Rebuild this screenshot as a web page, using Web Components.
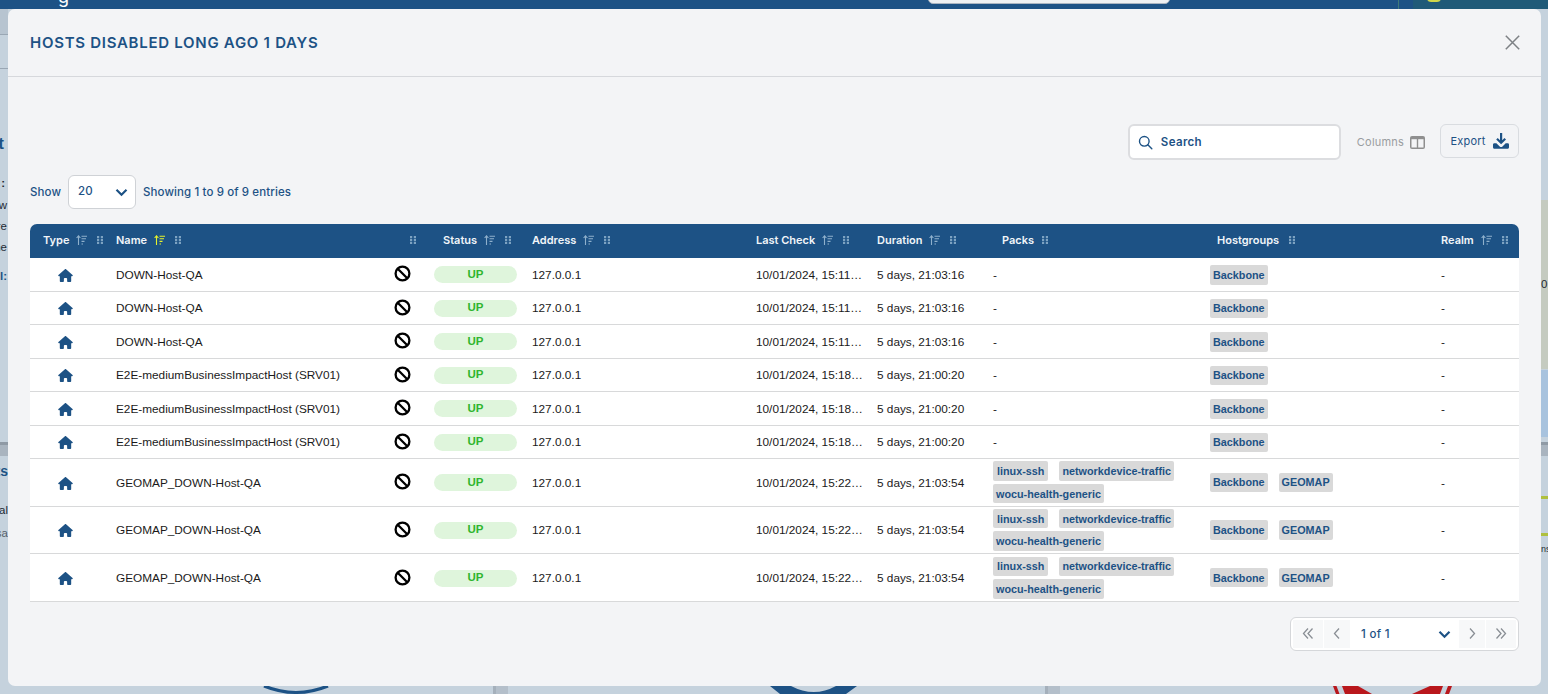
<!DOCTYPE html>
<html lang="en">
<head>
<meta charset="utf-8">
<title>Hosts disabled</title>
<style>
html,body{margin:0;padding:0;height:694px;overflow:hidden;background:#c5d2dd}
body{font-family:Inter,"Liberation Sans",sans-serif;color:#1d5285}
</style>
</head>
<body>
<x-backdrop></x-backdrop>
<x-modal heading="HOSTS DISABLED LONG AGO 1 DAYS">
  <x-toolbar></x-toolbar>
  <x-length-bar></x-length-bar>
  <x-table id="t"></x-table>
  <x-pager></x-pager>
</x-modal>
<script>
const COLS='86px 270px 48px 98px 224px 121px 116px 217px 231px 78px';
const def=(name,html,extra)=>{
  customElements.define(name,class extends HTMLElement{
    connectedCallback(){
      if(this.shadowRoot)return;
      const r=this.attachShadow({mode:'open'});
      r.innerHTML=typeof html==='function'?html(this):html;
      if(extra)extra(this,r);
    }
  });
};
const ICON={
 home:'<svg width="15" height="13" viewBox="0 0 576 512" fill="#1d5285"><path d="M575.8 255.5c0 18-15 32.1-32 32.1h-32l.7 160.2c0 2.7-.2 5.4-.5 8.1V472c0 22.1-17.9 40-40 40H456c-1.1 0-2.2 0-3.3-.1-1.4.1-2.8.1-4.2.1H392c-22.1 0-40-17.9-40-40V384c0-17.7-14.3-32-32-32H256c-17.7 0-32 14.3-32 32v88c0 22.1-17.9 40-40 40H128c-1.5 0-3-.1-4.5-.2-1.2.1-2.4.2-3.6.2H104c-22.1 0-40-17.9-40-40V360c0-.9 0-1.9.1-2.8V287.600H32c-18 0-32-14-32-32.100 0-9 3-17 10-24L266.400 8c7-7 15-8 22-8s15 2 21 7L564.800 231.500c8 7 12 15 11 24z"/></svg>',
 ban:'<svg width="17" height="17" viewBox="0 0 17 17" fill="none" stroke="#000" stroke-width="2.3"><circle cx="8.500" cy="8.500" r="6.900"/><path d="M3.700 3.700l9.600 9.600"/></svg>',
 search:'<svg width="15" height="15" viewBox="0 0 15 15" fill="none" stroke="#1d5285" stroke-width="1.400"><circle cx="6.300" cy="6.300" r="4.800"/><path d="M9.800 9.800l4 4" stroke-linecap="round"/></svg>',
 cols:'<svg width="15" height="13" viewBox="0 0 15 13"><rect width="15" height="13" rx="2" fill="#8f8f8f"/><rect x="1.500" y="3.200" width="5.300" height="8.300" fill="#f3f4f6"/><rect x="8.200" y="3.200" width="5.300" height="8.300" fill="#f3f4f6"/></svg>',
 export:'<svg width="16" height="16" viewBox="0 0 16 16" fill="#1d5285"><path d="M7 0h2.200v7.200l2.300-2.300 1.500 1.500L8.100 11.300 3.200 6.400l1.500-1.500L7 7.200z"/><path d="M0 11.700c0-.8.600-1.400 1.400-1.400h2l3.300 3.200c.8.700 2 .7 2.800 0l3.200-3.200h2c.8 0 1.300.6 1.300 1.400v2.600c0 .9-.6 1.500-1.400 1.500H1.400C.6 15.800 0 15.200 0 14.300z"/></svg>',
 chev:'<svg width="13" height="9" viewBox="0 0 13 9" fill="none" stroke="#1d5285" stroke-width="2.200"><path d="M1.500 1.800l5 5 5-5"/></svg>'
};
const pg=d=>`<svg width="12" height="13" viewBox="0 0 12 13" fill="none" stroke="#8a8f95" stroke-width="1.300"><path d="${d}"/></svg>`;

def('x-backdrop',`<style>
:host{position:absolute;inset:0;display:block;overflow:hidden;background:#c5d2dd;font:700 11.500px "Liberation Sans",sans-serif;color:#1f2a33}
div,span,svg{position:absolute}
.top{left:0;right:0;top:0;height:9px;background:#1d5285}
.side{left:0;width:8px}
.t{white-space:nowrap}
</style>
<div class="top"></div>
<span class="t" style="left:58px;top:-14px;font:400 18px Inter,sans-serif;color:#fff">g</span>
<div style="left:928px;top:-30px;width:240px;height:32px;background:#eef0f2;border:1px solid #aab4c0;border-radius:5px"></div>
<div style="left:1398px;top:0;width:1px;height:9px;background:#3f7a7a"></div>
<div style="left:1413px;top:0;width:135px;height:9px;background:#1f5a78"></div>
<div style="left:1427px;top:-6px;width:14px;height:8px;border-radius:7px;background:#cfd64a"></div>
<div class="side" style="top:9px;height:25px;background:#b7c4d0;border-bottom:1px solid #9aa7b4"></div>
<div class="side" style="top:68px;height:1px;background:#9aa7b4"></div>
<div class="side" style="top:442px;height:14px;background:#a9b4bf;border-top:3px solid #8f9aa5;box-sizing:border-box"></div>
<div style="left:1541px;width:7px;top:442px;height:14px;background:#a9b4bf;border-top:3px solid #8f9aa5;box-sizing:border-box"></div>
<div style="left:1541px;width:7px;top:200px;height:169px;background:#c5cbc0"></div>
<div style="left:1541px;width:7px;top:370px;height:67px;background:#a8c3de"></div>
<div style="left:1541px;width:7px;top:496px;height:3px;background:#afc03e"></div>
<div style="left:1541px;width:7px;top:533px;height:3px;background:#afc03e"></div>
<span class="t" style="right:1544px;top:134px;font-size:17px;color:#1d5285">t</span>
<span class="t" style="right:1543px;top:177px">:</span>
<span class="t" style="right:1541px;top:199px;font-weight:400">w</span>
<span class="t" style="right:1541px;top:220px;font-weight:400">re</span>
<span class="t" style="right:1541px;top:241px;font-weight:400">ne</span>
<span class="t" style="right:1541px;top:270px;color:#1d5285">l:</span>
<span class="t" style="right:1540px;top:463px;font-size:14px;color:#1d5285">ts</span>
<span class="t" style="right:1540px;top:504px;font-weight:400">al</span>
<span class="t" style="right:1540px;top:527px;font-weight:400;color:#55606a">sa</span>
<span class="t" style="left:1541px;top:278px;font-weight:400">0.</span>
<span class="t" style="left:1541px;top:544px;font-weight:400;font-size:9px">ns</span>
<div style="left:493px;top:686px;width:15px;height:8px;background:#b4bfca;border-left:3px solid #a5b0bb;box-sizing:border-box"></div>
<div style="left:1045px;top:686px;width:15px;height:8px;background:#b4bfca;border-left:3px solid #a5b0bb;box-sizing:border-box"></div>
<svg style="left:0;top:680px" width="1548" height="14" viewBox="0 680 1548 14">
<path d="M264 686Q296 699 328 686" fill="none" stroke="#1d5285" stroke-width="3"/>
<path d="M770 686L780 694H846L857 686H836Q814 698 791 686Z" fill="#1d5285"/>
<path d="M1333 686h3.500l3 8h-3.500zM1342 686h16l14 8h-27zM1430 686h13l-3 8h-28zM1448 686h4l-3 8h-4z" fill="#b9171c"/>
</svg>
`);

def('x-modal',h=>`<style>
:host{position:absolute;left:8px;top:9px;width:1533px;height:677px;display:flex;flex-direction:column;background:#f3f4f6;border-radius:7px;overflow:hidden}
header{height:68px;flex:none;box-sizing:border-box;border-bottom:1px solid #d6d8dc;display:flex;align-items:center;justify-content:space-between;padding:0 21px 1px 22px}
h1{margin:0;font:600 15px Inter,"Liberation Sans",sans-serif;color:#1d5285;letter-spacing:.72px}
main{flex:1;padding:47px 22px 0;display:flex;flex-direction:column}
svg{display:block}
</style>
<header><h1>${h.getAttribute('heading')}</h1>
<svg width="15" height="15" viewBox="0 0 15 15" stroke="#7d8185" stroke-width="1.500" fill="none"><path d="M.800.800l13.400 13.400M14.200.800L.800 14.200"/></svg></header>
<main><slot></slot></main>`);

def('x-toolbar',`<style>
:host{display:flex;justify-content:flex-end;align-items:flex-start;height:36px;font:11.500px Inter,"Liberation Sans",sans-serif}
.s{width:213px;height:36px;box-sizing:border-box;background:#fff;border:2px solid #dcdde0;border-radius:6px;display:flex;align-items:center;gap:8px;padding:0 0 0 8px;font-weight:600;color:#1d5285;letter-spacing:.35px}
.c{display:flex;align-items:center;height:36px;margin-left:16px;color:#9a9da0;gap:6px;font-size:11px;letter-spacing:.2px}
.e{display:flex;align-items:center;justify-content:center;gap:7px;margin-left:15px;width:79px;height:34px;box-sizing:border-box;border:1px solid #d9dce0;border-radius:6px;color:#1d5285;font-size:11px;letter-spacing:.2px}
svg{display:block}
</style>
<div class="s">${ICON.search}<span>Search</span></div>
<div class="c"><span>Columns</span>${ICON.cols}</div>
<div class="e"><span>Export</span>${ICON.export}</div>`);

def('x-length-bar',`<style>
:host{display:flex;align-items:center;gap:7px;height:34px;margin:15px 0;font:500 11.500px Inter,"Liberation Sans",sans-serif;color:#1d5285;letter-spacing:.1px}
.sel{width:68px;height:34px;box-sizing:border-box;background:#fff;border:1px solid #cfd2d6;border-radius:6px;display:flex;align-items:center;justify-content:space-between;padding:0 7px 2px 9px}
svg{display:block;margin-top:3px}
</style>
<span>Show</span>
<div class="sel"><span>20</span>${ICON.chev}</div>
<span>Showing 1 to 9 of 9 entries</span>`);

def('x-sort',h=>{const c=h.hasAttribute('active')?'#e6f22c':'#8fb0cc';return `<style>:host{display:inline-flex;margin-left:7px}svg{display:block}</style>
<svg width="11" height="10" viewBox="0 0 11 10" fill="none" stroke="${c}" stroke-width="1.100"><path d="M2.500 10V1M.600 3l1.900-2.200L4.400 3"/><path d="M5.500 1.200H11M5.500 3.800H10M5.500 6.400H8.500M5.500 9H7"/></svg>`;});

def('x-grip',`<style>:host{display:inline-flex}svg{display:block}</style>
<svg width="6" height="8" viewBox="0 0 6 8" fill="#7da3c2"><rect width="2.200" height="2.200"/><rect x="3.800" width="2.200" height="2.200"/><rect y="2.900" width="2.200" height="2.200"/><rect x="3.800" y="2.900" width="2.200" height="2.200"/><rect y="5.800" width="2.200" height="2.200"/><rect x="3.800" y="5.800" width="2.200" height="2.200"/></svg>`);

def('x-th',h=>`<style>
:host{display:flex;align-items:center;font:600 11px Inter,"Liberation Sans",sans-serif;color:#f1f5f9;white-space:nowrap;padding-left:${h.getAttribute('pad')||0}px;padding-bottom:2px;box-sizing:border-box}
.g{margin-left:${h.getAttribute('gap')||10}px;display:inline-flex}
</style><span>${h.getAttribute('label')||''}</span>${h.hasAttribute('sort')?`<x-sort ${h.getAttribute('sort')==='on'?'active':''}></x-sort>`:''}<span class="g"><x-grip></x-grip></span>`);

def('x-thead',`<style>
:host{display:grid;grid-template-columns:${COLS};height:34px;background:#1d5285;border-radius:7px 7px 0 0}
</style><slot></slot>`);

def('x-tag',`<style>
:host{display:inline-flex;align-items:center;height:19.500px;padding:0 3px;background:#d9d9d9;border-radius:2px;font:700 10.800px "Liberation Sans",sans-serif;color:#1d5285;white-space:nowrap}
</style><slot></slot>`);

def('x-pill',`<style>
:host{display:flex;align-items:center;justify-content:center;width:83px;height:17px;padding-bottom:2px;box-sizing:border-box;border-radius:9px;background:#dff5dc;color:#2fb52f;font:700 11.500px "Liberation Sans",sans-serif}
</style><slot></slot>`);

def('x-row',h=>{
  const d=JSON.parse(h.getAttribute('data'));
  const tags=(a)=>a.length?a.map(t=>`<x-tag${t==='linux-ssh'?' style="padding:0 4px"':''}>${t}</x-tag>`).join(''):'-';
  return `<style>
:host{display:grid;grid-template-columns:${COLS};height:${d.tall?47.67:33.5}px;box-sizing:border-box;padding-top:1px;background:#fff;border-bottom:1px solid #d8d9da;font:11.800px "Liberation Sans",sans-serif;color:#1a1a1a}
.c{display:flex;align-items:center;white-space:nowrap;min-width:0}
.i{justify-content:center}
.h{padding-left:27.500px;box-sizing:border-box;padding-top:1px}
.tags{display:flex;flex-wrap:wrap;gap:3px 11px;align-content:center;${d.tall?'padding-bottom:1px;':''}}
.p{padding-left:0}
svg{display:block}
.b{padding-bottom:2px}
</style>
<div class="c h">${ICON.home}</div>
<div class="c">${d.name}</div>
<div class="c i b" style="padding-right:16px">${ICON.ban}</div>
<div class="c"><x-pill>UP</x-pill></div>
<div class="c">127.0.0.1</div>
<div class="c">${d.check}</div>
<div class="c">${d.dur}</div>
<div class="c tags p">${tags(d.packs)}</div>
<div class="c tags">${tags(d.groups)}</div>
<div class="c">-</div>`;
});

def('x-table',`<style>:host{display:block}</style>
<x-thead>
<x-th label="Type" sort pad="13"></x-th>
<x-th label="Name" sort="on"></x-th>
<x-th label="" pad="24" gap="0"></x-th>
<x-th label="Status" sort pad="9"></x-th>
<x-th label="Address" sort></x-th>
<x-th label="Last Check" sort></x-th>
<x-th label="Duration" sort></x-th>
<x-th label="Packs" pad="9" gap="8"></x-th>
<x-th label="Hostgroups" pad="7"></x-th>
<x-th label="Realm" sort></x-th>
</x-thead><slot></slot>`);

def('x-pager',`<style>
:host{display:flex;align-items:stretch;align-self:flex-end;width:229px;height:34px;margin-top:15px;box-sizing:border-box;padding:2px;background:#fff;border:1px solid #d5d7da;border-radius:6px;font:500 11.500px Inter,"Liberation Sans",sans-serif;color:#1d5285;letter-spacing:.3px}
.b{display:flex;align-items:center;justify-content:center;flex:none;background:#f7f8f9}
.w{width:30px}.n{width:26px;margin-left:1px}
.m{flex:1;display:flex;align-items:center;justify-content:space-between;padding:0 8px 0 11px}
svg{display:block}
.m svg{margin-top:2px}
</style>
<div class="b w">${pg('M6 1.500L1.500 6.500 6 11.500M10.500 1.500L6 6.500l4.500 5')}</div>
<div class="b n">${pg('M8 1.500L3.500 6.500 8 11.500')}</div>
<div class="m"><span>1 of 1</span>${ICON.chev}</div>
<div class="b n" style="margin:0 1px 0 0">${pg('M4 1.500l4.500 5-4.500 5')}</div>
<div class="b w">${pg('M1.500 1.500L6 6.500l-4.500 5M6 1.500l4.500 5-4.500 5')}</div>`);

const packs=['linux-ssh','networkdevice-traffic','wocu-health-generic'];
const rows=[];
for(let i=0;i<3;i++)rows.push({name:'DOWN-Host-QA',check:'10/01/2024, 15:11…',dur:'5 days, 21:03:16',packs:[],groups:['Backbone']});
for(let i=0;i<3;i++)rows.push({name:'E2E-mediumBusinessImpactHost (SRV01)',check:'10/01/2024, 15:18…',dur:'5 days, 21:00:20',packs:[],groups:['Backbone']});
for(let i=0;i<3;i++)rows.push({name:'GEOMAP_DOWN-Host-QA',check:'10/01/2024, 15:22…',dur:'5 days, 21:03:54',packs,groups:['Backbone','GEOMAP'],tall:1});
const t=document.getElementById('t');
rows.forEach(r=>{const e=document.createElement('x-row');e.setAttribute('data',JSON.stringify(r));t.appendChild(e);});
</script>
</body>
</html>
